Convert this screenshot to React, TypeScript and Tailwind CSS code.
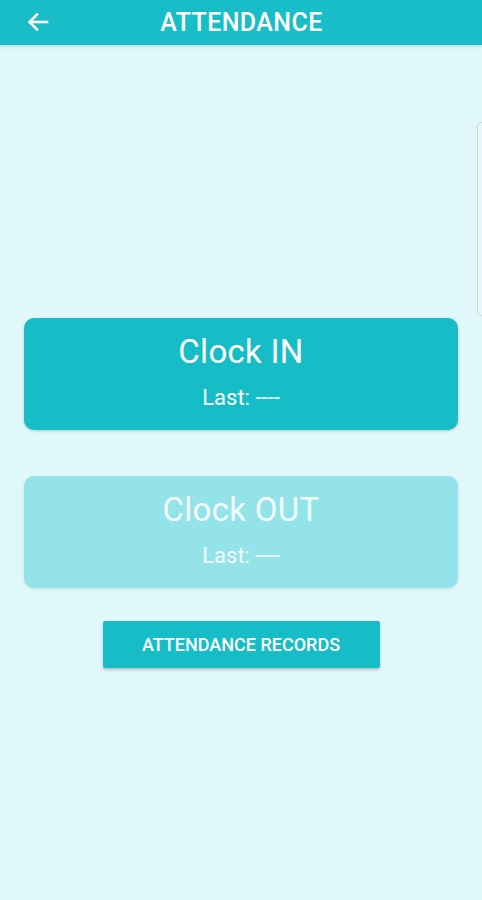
import React from "react";

export default function App() {
  return (
    <div
      className="relative w-[482px] h-[900px] bg-[#e1f8fb] overflow-hidden flex flex-col"
      style={{ fontFamily: "Roboto, 'Noto Sans', sans-serif" }}
    >
      <header className="h-[45px] bg-[#19bdc7] flex items-center relative shadow-[0_2px_3px_rgba(0,0,0,0.12)] shrink-0">
        <svg
          className="absolute left-[27px] top-[12px]"
          width="22"
          height="20"
          viewBox="0 0 22 20"
          fill="none"
          stroke="white"
          strokeWidth="2.6"
          strokeLinecap="square"
        >
          <path d="M20 10H4" />
          <path d="M10 2.5L2.5 10L10 17.5" />
        </svg>
        <h1 className="w-full text-center text-white text-[25px] font-medium tracking-[0.4px] pl-[1px]">
          ATTENDANCE
        </h1>
      </header>

      <div className="flex flex-col items-center pt-[273px]">
        <div className="w-[434px] h-[112px] rounded-[10px] bg-[#17bdc6] shadow-[0_1px_3px_rgba(0,0,0,0.2)] flex flex-col items-center text-white">
          <div className="text-[33px] leading-none mt-[17px] tracking-[0.3px]">Clock IN</div>
          <div className="text-[22px] leading-none mt-[19px]">Last: ----</div>
        </div>

        <div className="w-[434px] h-[112px] rounded-[10px] bg-[#94e3e8] shadow-[0_1px_3px_rgba(0,0,0,0.12)] flex flex-col items-center text-white mt-[46px]">
          <div className="text-[33px] leading-none mt-[17px] tracking-[0.3px] text-[#f2fcfd]">Clock OUT</div>
          <div className="text-[22px] leading-none mt-[19px] text-[#f2fcfd]">Last: ----</div>
        </div>

        <button className="w-[277px] h-[47px] mt-[33px] bg-[#17bdc6] text-white text-[18px] font-medium rounded-[2px] shadow-[0_2px_3px_rgba(0,0,0,0.22)] flex items-center justify-center">
          ATTENDANCE RECORDS
        </button>
      </div>

      <div className="absolute left-[477px] top-[122px] w-[12px] h-[194px] rounded-[5px] border border-[#c9d3d6] bg-[#e8f9fb]" />
    </div>
  );
}
